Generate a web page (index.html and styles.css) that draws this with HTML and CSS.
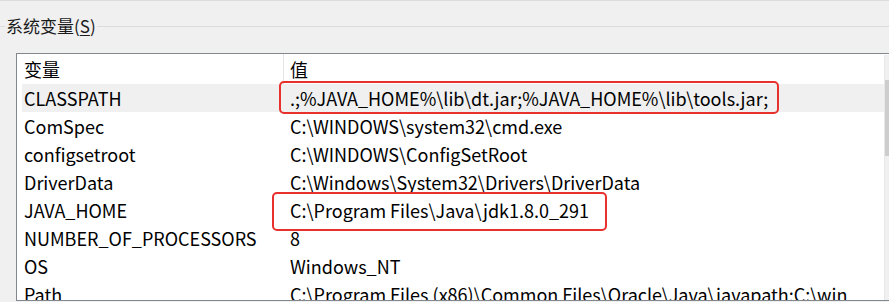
FILE: index.html
```html
<!DOCTYPE html>
<html lang="zh-CN">
<head>
<meta charset="utf-8">
<link rel="stylesheet" href="styles.css">
</head>
<body>
<div class="page">
  <div class="group-head">
    <span class="group-title">系统变量(<u>S</u>)</span>
  </div>
  <div class="listbox">
    <div class="list-main">
      <div class="row head">
        <div class="c1">变量</div>
        <div class="c2">值</div>
      </div>
      <div class="row sel">
        <div class="c1">CLASSPATH</div>
        <div class="c2">.;%JAVA_HOME%\lib\dt.jar;%JAVA_HOME%\lib\tools.jar;</div>
      </div>
      <div class="row">
        <div class="c1">ComSpec</div>
        <div class="c2">C:\WINDOWS\system32\cmd.exe</div>
      </div>
      <div class="row">
        <div class="c1">configsetroot</div>
        <div class="c2">C:\WINDOWS\ConfigSetRoot</div>
      </div>
      <div class="row">
        <div class="c1">DriverData</div>
        <div class="c2">C:\Windows\System32\Drivers\DriverData</div>
      </div>
      <div class="row">
        <div class="c1">JAVA_HOME</div>
        <div class="c2">C:\Program Files\Java\jdk1.8.0_291</div>
      </div>
      <div class="row">
        <div class="c1">NUMBER_OF_PROCESSORS</div>
        <div class="c2">8</div>
      </div>
      <div class="row">
        <div class="c1">OS</div>
        <div class="c2">Windows_NT</div>
      </div>
      <div class="row">
        <div class="c1">Path</div>
        <div class="c2 clip">C:\Program Files (x86)\Common Files\Oracle\Java\javapath;C:\win</div>
      </div>
    </div>
    <div class="vscroll">
      <div class="arrow-up"></div>
      <div class="thumb"></div>
    </div>
  </div>
  <div class="mark mark-classpath"></div>
  <div class="mark mark-javahome"></div>
</div>
</body>
</html>
```
FILE: styles.css
```css
html, body {
  margin: 0;
  padding: 0;
  background: #f0f0f0;
  overflow: hidden;
}
.page {
  position: relative;
  width: 889px;
  height: 302px;
  border-top: 1px solid #dcdcdc;
  box-sizing: border-box;
  overflow: hidden;
  font-family: "Noto Sans CJK SC", "Noto Sans", sans-serif;
  color: #000;
}
.group-head {
  position: relative;
  height: 52px;
}
.group-head::before {
  content: "";
  position: absolute;
  left: 0;
  right: 0;
  top: 25px;
  border-top: 1px solid #dcdcdc;
}
.group-title {
  position: absolute;
  left: 5px;
  top: 13px;
  padding: 0 1px;
  background: #f0f0f0;
  font-size: 17px;
  line-height: 24px;
  color: #1a1a1a;
}
.group-title u {
  text-underline-offset: 2px;
}
.listbox {
  display: flex;
  margin-left: 16px;
  width: 900px;
  height: 248px;
  box-sizing: border-box;
  border: 1px solid #828790;
  border-right: none;
  background: #fff;
  overflow: hidden;
}
.list-main {
  width: 862px;
  padding-left: 5px;
  flex: none;
  overflow: hidden;
}
.row {
  display: flex;
  height: 28px;
  font-size: 18px;
  line-height: 28px;
  white-space: nowrap;
}
.row.head {
  height: 30px;
  line-height: 30px;
}
.row.sel {
  background: #f0f0f0;
}
.c1 {
  width: 261px;
  padding-left: 2px;
  box-sizing: border-box;
  flex: none;
}
.c2 {
  padding-left: 7px;
  overflow: hidden;
  flex: none;
  width: 572px;
  box-sizing: border-box;
}
.head .c2 {
  border-left: 1px solid #e5e5e5;
  padding-left: 6px;
}
.vscroll {
  width: 17px;
  margin-top: 1px;
  border-left: 1px solid #e8e8e8;
  background: #f0f0f0;
  flex: none;
  position: relative;
}
.arrow-up {
  margin: 12px 0 0 6px;
  width: 0;
  height: 0;
  border-left: 3px solid transparent;
  border-right: 3px solid transparent;
  border-bottom: 4px solid #606060;
}
.thumb {
  margin-top: 9px;
  height: 76px;
  background: #cdcdcd;
}
.mark {
  position: absolute;
  border: 2px solid #e8302c;
  border-radius: 5px;
  box-sizing: border-box;
}
.mark-classpath {
  left: 279px;
  top: 80px;
  width: 500px;
  height: 33px;
}
.mark-javahome {
  left: 272px;
  top: 191px;
  width: 335px;
  height: 39px;
}
```
